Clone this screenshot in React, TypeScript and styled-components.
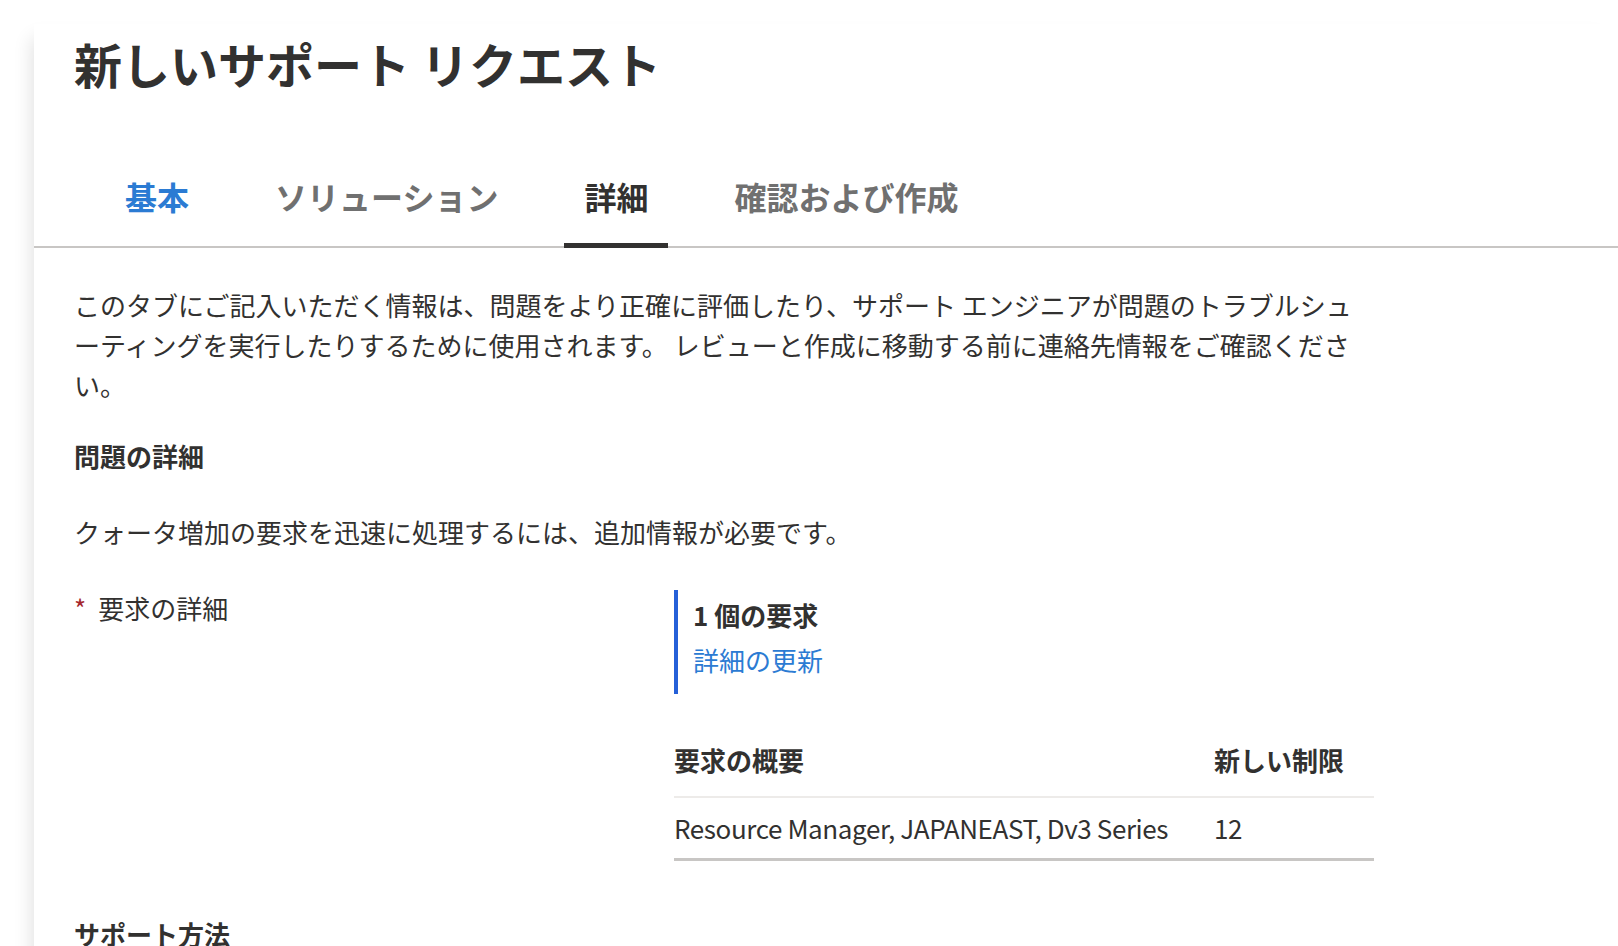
import React from "react";
import styled, { createGlobalStyle, css } from "styled-components";

const GlobalStyle = createGlobalStyle`
	html, body {
		margin: 0;
		padding: 0;
		background: #ffffff;
	}
	body {
		font-family: "Noto Sans CJK JP", "Noto Sans", sans-serif;
		color: #323130;
		overflow: hidden;
	}
`;

const Page = styled.div`
	width: 1618px;
	height: 946px;
	overflow: hidden;
	background: #ffffff;
`;

const Panel = styled.section`
	margin: 24px 0 0 34px;
	min-height: 1000px;
	background: #ffffff;
	box-shadow: -10px 6px 18px -8px rgba(0, 0, 0, 0.12);
`;

const Header = styled.header`
	padding: 7px 40px 0;
`;

const Title = styled.h1`
	margin: 0;
	font-size: 48px;
	line-height: 64px;
	font-weight: 700;
	color: #323130;
`;

const TabBar = styled.nav`
	display: flex;
	padding-left: 71px;
	border-bottom: 2px solid #c8c6c4;
`;

type TabState = "done" | "active" | "idle";

const tabColors: Record<TabState, string> = {
	done: "#2b7bd3",
	active: "#323130",
	idle: "#707070",
};

const Tab = styled.div<{ $state: TabState }>`
	position: relative;
	padding: 79px 20px 28px;
	margin-right: 46px;
	font-size: 32px;
	line-height: 44px;
	font-weight: 700;
	color: ${p => tabColors[p.$state]};
	cursor: pointer;

	${p =>
		p.$state === "active" &&
		css`
			&::after {
				content: "";
				position: absolute;
				left: 0;
				right: 0;
				bottom: -2px;
				height: 5px;
				background: #323130;
			}
		`}
`;

const Content = styled.div`
	padding: 0 40px;
`;

const Lead = styled.p`
	margin: 37px 0 0;
	max-width: 1290px;
	font-size: 26px;
	line-height: 40px;
`;

const SectionTitle = styled.h2<{ $gap: number }>`
	margin: ${p => p.$gap}px 0 0;
	font-size: 26px;
	line-height: 40px;
	font-weight: 700;
`;

const Info = styled.p`
	margin: 36px 0 0;
	font-size: 26px;
	line-height: 40px;
`;

const FieldRow = styled.div`
	display: grid;
	grid-template-columns: 600px 700px;
	margin-top: 36px;
`;

const Label = styled.div`
	font-size: 26px;
	line-height: 40px;
`;

const Required = styled.span`
	color: #a4262c;
	margin-right: 12px;
`;

const Summary = styled.div`
	border-left: 4px solid #2560d8;
	padding: 5px 0 14px 15px;
	margin-top: 2px;
`;

const SummaryCount = styled.div`
	font-size: 26px;
	line-height: 40px;
	font-weight: 700;
	margin-bottom: 5px;
`;

const Link = styled.a`
	display: block;
	font-size: 26px;
	line-height: 40px;
	color: #2b7bd3;
	text-decoration: none;
	cursor: pointer;
`;

const Table = styled.table`
	width: 700px;
	margin-top: 30px;
	border-collapse: collapse;
	font-size: 26px;
	line-height: 40px;
`;

const HeadCell = styled.th<{ $width?: number }>`
	text-align: left;
	font-weight: 700;
	padding: 16px 0;
	width: ${p => (p.$width ? `${p.$width}px` : "auto")};
	border-bottom: 2px solid #edebe9;
`;

const Cell = styled.td`
	padding: 10px 0 10px;
	letter-spacing: -0.4px;
	border-bottom: 3px solid #c8c6c4;
`;

const tabs: { label: string; state: TabState }[] = [
	{ label: "基本", state: "done" },
	{ label: "ソリューション", state: "idle" },
	{ label: "詳細", state: "active" },
	{ label: "確認および作成", state: "idle" },
];

export default function App() {
	return (
		<Page>
			<GlobalStyle />
			<Panel>
				<Header>
					<Title>新しいサポート リクエスト</Title>
				</Header>
				<TabBar>
					{tabs.map(tab => (
						<Tab key={tab.label} $state={tab.state}>
							{tab.label}
						</Tab>
					))}
				</TabBar>
				<Content>
					<Lead>
						このタブにご記入いただく情報は、問題をより正確に評価したり、サポート
						エンジニアが問題のトラブルシューティングを実行したりするために使用されます。
						レビューと作成に移動する前に連絡先情報をご確認ください。
					</Lead>
					<SectionTitle $gap={31}>問題の詳細</SectionTitle>
					<Info>クォータ増加の要求を迅速に処理するには、追加情報が必要です。</Info>
					<FieldRow>
						<Label>
							<Required>*</Required>要求の詳細
						</Label>
						<div>
							<Summary>
								<SummaryCount>1 個の要求</SummaryCount>
								<Link>詳細の更新</Link>
							</Summary>
							<Table>
								<thead>
									<tr>
										<HeadCell $width={540}>要求の概要</HeadCell>
										<HeadCell>新しい制限</HeadCell>
									</tr>
								</thead>
								<tbody>
									<tr>
										<Cell>Resource Manager, JAPANEAST, Dv3 Series</Cell>
										<Cell>12</Cell>
									</tr>
								</tbody>
							</Table>
						</div>
					</FieldRow>
					<SectionTitle $gap={53}>サポート方法</SectionTitle>
				</Content>
			</Panel>
		</Page>
	);
}
